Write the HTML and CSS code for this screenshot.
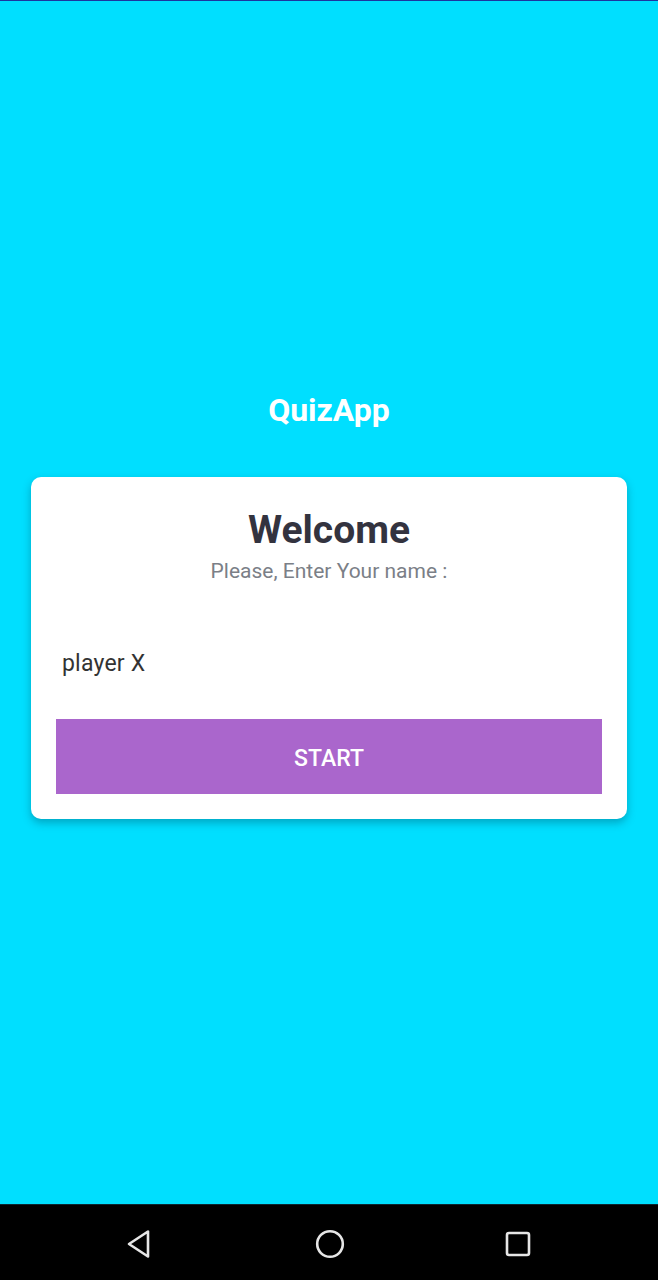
FILE: index.html
```html
<!DOCTYPE html>
<html>
<head>
<meta charset="utf-8">
<link rel="stylesheet" href="styles.css">
</head>
<body>
<div class="screen">
  <main class="main">
    <h1 class="app-title">QuizApp</h1>
    <section class="card">
      <h2 class="welcome">Welcome</h2>
      <p class="prompt">Please, Enter Your name :</p>
      <div class="name-input">player X</div>
      <button class="start-btn">START</button>
    </section>
  </main>
  <nav class="navbar">
    <svg class="nav-icon" width="32" height="32" viewBox="0 0 32 32"><path d="M24 3.5 L24 28.5 L5 16 Z" fill="none" stroke="#e6e6e6" stroke-width="2.6" stroke-linejoin="round"/></svg>
    <svg class="nav-icon" width="32" height="32" viewBox="0 0 32 32"><circle cx="16" cy="16" r="12.8" fill="none" stroke="#e6e6e6" stroke-width="2.6"/></svg>
    <svg class="nav-icon" width="32" height="32" viewBox="0 0 32 32"><rect x="5" y="5" width="22" height="22" rx="2" fill="none" stroke="#e6e6e6" stroke-width="2.6"/></svg>
  </nav>
</div>
</body>
</html>
```

FILE: styles.css
```css
html, body {
  margin: 0;
  padding: 0;
}
body {
  font-family: Roboto, "Liberation Sans", sans-serif;
  background: #000;
}
.screen {
  width: 658px;
  height: 1280px;
  display: flex;
  flex-direction: column;
}
.main {
  height: 1204px;
  background: #00dfff;
  border-top: 1px solid #1c35a0;
  display: flex;
  flex-direction: column;
  align-items: center;
  padding-top: 390px;
  box-sizing: border-box;
}
.app-title {
  margin: 0;
  font-size: 32px;
  line-height: 38px;
  font-weight: 700;
  color: #ffffff;
}
.card {
  margin-top: 48px;
  width: 596px;
  box-sizing: border-box;
  background: #fff;
  border-radius: 10px;
  box-shadow: 0 4px 8px rgba(0, 60, 80, 0.35);
  padding: 29px 25px 25px;
  display: flex;
  flex-direction: column;
  align-items: center;
}
.welcome {
  margin: 0;
  font-size: 39px;
  line-height: 48px;
  font-weight: 700;
  color: #33333f;
}
.prompt {
  margin: 5px 0 0;
  font-size: 21px;
  line-height: 24px;
  color: #7b7f87;
}
.name-input {
  align-self: stretch;
  margin-top: 67px;
  padding-left: 6px;
  font-size: 23px;
  line-height: 28px;
  color: #333333;
  letter-spacing: 0.2px;
}
.start-btn {
  align-self: stretch;
  margin-top: 41px;
  height: 75px;
  border: none;
  background: #aa66cc;
  color: #ffffff;
  font-family: Roboto, "Liberation Sans", sans-serif;
  font-size: 23px;
  font-weight: 500;
  padding: 4px 0 0;
}
.navbar {
  height: 76px;
  background: #000;
  border-top: 1px solid #0b2630;
  box-sizing: border-box;
  display: flex;
  align-items: center;
  padding-top: 2px;
}
.nav-icon:nth-child(1) { margin-left: 124px; }
.nav-icon:nth-child(2) { margin-left: 158px; }
.nav-icon:nth-child(3) { margin-left: 156px; }
```
